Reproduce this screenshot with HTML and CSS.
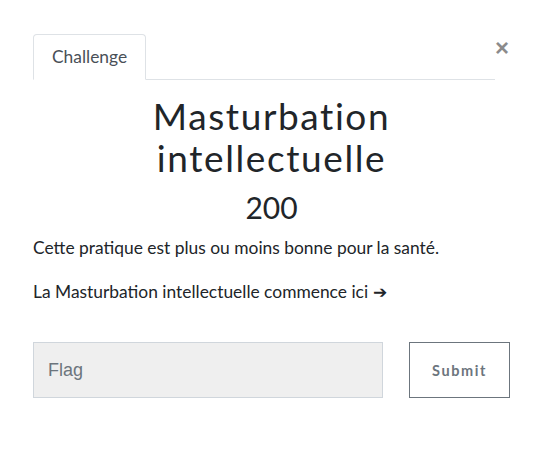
FILE: index.html
```html
<!DOCTYPE html>
<html>
<head>
<meta charset="utf-8">
<link rel="stylesheet" href="styles.css">
</head>
<body>
<div class="modal">
  <div class="head">
    <ul class="tabs">
      <li class="tab">Challenge</li>
    </ul>
    <button class="close" aria-label="Close">&times;</button>
  </div>
  <h2 class="title">Masturbation intellectuelle</h2>
  <h3 class="points">200</h3>
  <div class="desc">
    <p>Cette pratique est plus ou moins bonne pour la santé.</p>
    <p>La Masturbation intellectuelle commence ici ➔</p>
  </div>
  <form class="flag-row">
    <input class="flag" type="text" placeholder="Flag">
    <button class="submit" type="button">Submit</button>
  </form>
</div>
</body>
</html>
```
FILE: styles.css
```css
* { box-sizing: border-box; }
body {
  margin: 0;
  background: #fff;
  font-family: Lato, "Noto Sans", sans-serif;
  color: #212529;
}
.modal {
  width: 477px;
  margin-left: 33px;
  padding-top: 34px;
}
.head {
  display: flex;
  align-items: flex-start;
}
.tabs {
  list-style: none;
  margin: 0;
  padding: 0;
  width: 462px;
  border-bottom: 1px solid #dee2e6;
  display: flex;
}
.tab {
  font-size: 17.4px;
  line-height: 25px;
  padding: 9px 18px 10px 18px;
  border: 1px solid #dee2e6;
  border-bottom: 1px solid #fff;
  border-radius: 4px 4px 0 0;
  margin-bottom: -1px;
  color: #495057;
}
.close {
  flex: 1;
  background: none;
  border: 0;
  padding: 0;
  margin-top: 2px;
  font-family: "Liberation Sans", Arial, sans-serif;
  font-size: 24px;
  font-weight: 700;
  line-height: 24px;
  color: #000;
  opacity: .45;
  text-align: right;
  padding-right: 1px;
}
.title {
  margin: 15px 0 0;
  text-align: center;
  font-weight: 400;
  font-size: 37px;
  line-height: 42px;
  letter-spacing: 1.6px;
  padding: 0 90px;
}
.points {
  margin: 10px 0 0;
  text-align: center;
  font-weight: 400;
  font-size: 30px;
  line-height: 36px;
}
.desc { margin-top: 10px; }
.desc p {
  margin: 0 0 18px;
  font-size: 17.4px;
  line-height: 26px;
}
.flag-row {
  display: flex;
  justify-content: space-between;
  margin-top: 37px;
}
.flag {
  width: 350px;
  height: 56px;
  background: #efefef;
  border: 1px solid #d0d6dc;
  padding: 0 14px;
  font-family: "Liberation Sans", Arial, sans-serif;
  font-size: 18px;
  color: #495057;
}
.flag::placeholder { color: #6c757d; }
.submit {
  width: 101px;
  height: 56px;
  background: #fff;
  border: 1px solid #6c757d;
  font-family: Lato, sans-serif;
  font-weight: 700;
  font-size: 14.5px;
  letter-spacing: 1.6px;
  color: #6c757d;
}
```
